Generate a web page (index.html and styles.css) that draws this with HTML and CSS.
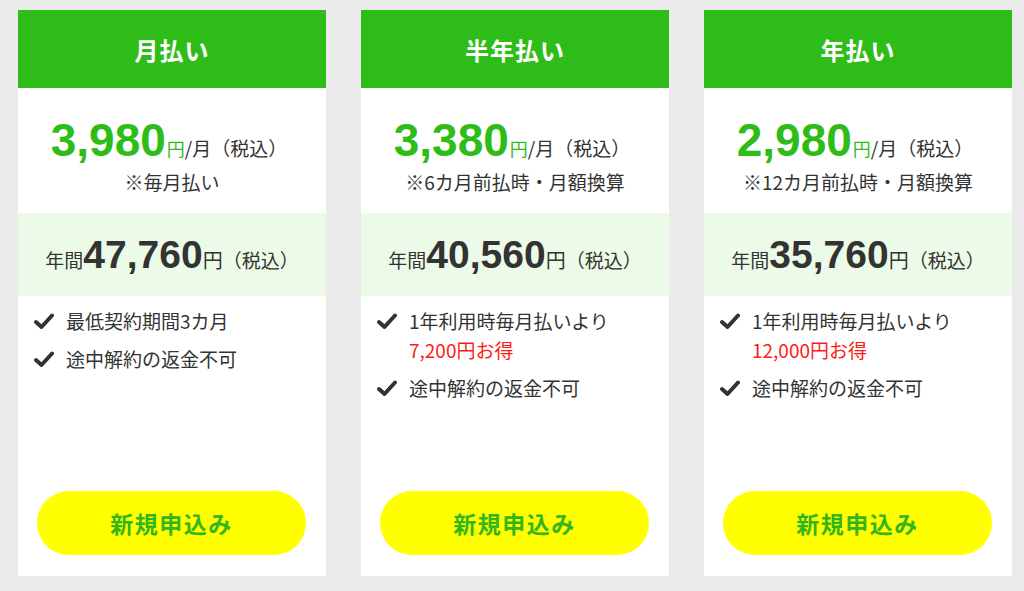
FILE: index.html
```html
<!DOCTYPE html>
<html lang="ja">
<head>
<meta charset="utf-8">
<title>料金プラン</title>
<link rel="stylesheet" href="styles.css">
</head>
<body>
<div class="plans">
  <div class="card">
    <div class="card-head">月払い</div>
    <div class="price">
      <div class="price-line"><span class="amount">3,980</span><span class="yen">円</span><span class="unit">/月（税込）</span></div>
      <div class="note">※毎月払い</div>
    </div>
    <div class="annual"><span class="small">年間</span><span class="annual-amount">47,760</span><span class="yen2">円</span><span class="small">（税込）</span></div>
    <ul class="features">
      <li><svg class="check" viewBox="0 0 20 17" width="20" height="17"><path d="M2 9 L7.5 14 L18 2.5" fill="none" stroke="#333" stroke-width="4" stroke-linejoin="round" stroke-linecap="round"/></svg><span>最低契約期間3カ月</span></li>
      <li><svg class="check" viewBox="0 0 20 17" width="20" height="17"><path d="M2 9 L7.5 14 L18 2.5" fill="none" stroke="#333" stroke-width="4" stroke-linejoin="round" stroke-linecap="round"/></svg><span>途中解約の返金不可</span></li>
    </ul>
    <a class="apply" href="#">新規申込み</a>
  </div>
  <div class="card">
    <div class="card-head">半年払い</div>
    <div class="price">
      <div class="price-line"><span class="amount">3,380</span><span class="yen">円</span><span class="unit">/月（税込）</span></div>
      <div class="note">※6カ月前払時・月額換算</div>
    </div>
    <div class="annual"><span class="small">年間</span><span class="annual-amount">40,560</span><span class="yen2">円</span><span class="small">（税込）</span></div>
    <ul class="features">
      <li><svg class="check" viewBox="0 0 20 17" width="20" height="17"><path d="M2 9 L7.5 14 L18 2.5" fill="none" stroke="#333" stroke-width="4" stroke-linejoin="round" stroke-linecap="round"/></svg><span>1年利用時毎月払いより<br><em class="deal">7,200円お得</em></span></li>
      <li><svg class="check" viewBox="0 0 20 17" width="20" height="17"><path d="M2 9 L7.5 14 L18 2.5" fill="none" stroke="#333" stroke-width="4" stroke-linejoin="round" stroke-linecap="round"/></svg><span>途中解約の返金不可</span></li>
    </ul>
    <a class="apply" href="#">新規申込み</a>
  </div>
  <div class="card">
    <div class="card-head">年払い</div>
    <div class="price">
      <div class="price-line"><span class="amount">2,980</span><span class="yen">円</span><span class="unit">/月（税込）</span></div>
      <div class="note">※12カ月前払時・月額換算</div>
    </div>
    <div class="annual"><span class="small">年間</span><span class="annual-amount">35,760</span><span class="yen2">円</span><span class="small">（税込）</span></div>
    <ul class="features">
      <li><svg class="check" viewBox="0 0 20 17" width="20" height="17"><path d="M2 9 L7.5 14 L18 2.5" fill="none" stroke="#333" stroke-width="4" stroke-linejoin="round" stroke-linecap="round"/></svg><span>1年利用時毎月払いより<br><em class="deal">12,000円お得</em></span></li>
      <li><svg class="check" viewBox="0 0 20 17" width="20" height="17"><path d="M2 9 L7.5 14 L18 2.5" fill="none" stroke="#333" stroke-width="4" stroke-linejoin="round" stroke-linecap="round"/></svg><span>途中解約の返金不可</span></li>
    </ul>
    <a class="apply" href="#">新規申込み</a>
  </div>
</div>
</body>
</html>
```

FILE: styles.css
```css
* { box-sizing: border-box; }
html, body { margin: 0; padding: 0; }
body {
  background: #ebebeb;
  font-family: "Noto Sans CJK JP", "Noto Sans", sans-serif;
  color: #333;
  width: 1024px;
  height: 591px;
  overflow: hidden;
}
.plans {
  display: flex;
  gap: 35px;
  padding: 10px 0 0 18px;
}
.card {
  width: 308px;
  height: 566px;
  background: #fff;
  display: flex;
  flex-direction: column;
}
.card-head {
  height: 78px;
  background: #2ebd18;
  color: #fff;
  font-size: 24px;
  font-weight: 700;
  display: flex;
  align-items: center;
  justify-content: center;
  letter-spacing: 1px;
}
.price {
  padding: 24px 0 17px;
  text-align: center;
}
.price-line {
  height: 56px;
  display: flex;
  align-items: baseline;
  justify-content: center;
  line-height: 56px;
  padding-right: 6px;
}
.amount {
  font-family: "Liberation Sans", Arial, sans-serif;
  font-weight: 700;
  font-size: 46px;
  color: #2ebd18;
}
.yen {
  color: #2ebd18;
  font-size: 18px;
  margin-left: 1px;
}
.unit {
  font-size: 19px;
  color: #333;
}
.note {
  font-size: 19px;
  line-height: 28px;
  color: #333;
}
.annual {
  height: 83px;
  background: #ecfbe7;
  display: flex;
  align-items: baseline;
  justify-content: center;
  line-height: 83px;
}
.annual .small {
  font-size: 19px;
}
.annual-amount {
  font-family: "Liberation Sans", Arial, sans-serif;
  font-weight: 700;
  font-size: 39px;
  color: #333;
}
.yen2 {
  font-size: 20px;
}
.features {
  list-style: none;
  margin: 0;
  padding: 10px 0 0 16px;
  flex: 1;
  display: flex;
  flex-direction: column;
  gap: 9px;
}
.features li {
  display: flex;
  align-items: flex-start;
  font-size: 19px;
  line-height: 29px;
  color: #333;
}
.check {
  flex: none;
  margin: 7px 12px 0 0;
}
.deal {
  font-style: normal;
  color: #ff1a1a;
}
.apply {
  display: flex;
  align-items: center;
  justify-content: center;
  height: 64px;
  margin: 0 20px 21px 19px;
  border-radius: 32px;
  background: #ffff00;
  color: #33b61c;
  font-size: 23px;
  font-weight: 700;
  text-decoration: none;
  letter-spacing: 1.5px;
}
```
